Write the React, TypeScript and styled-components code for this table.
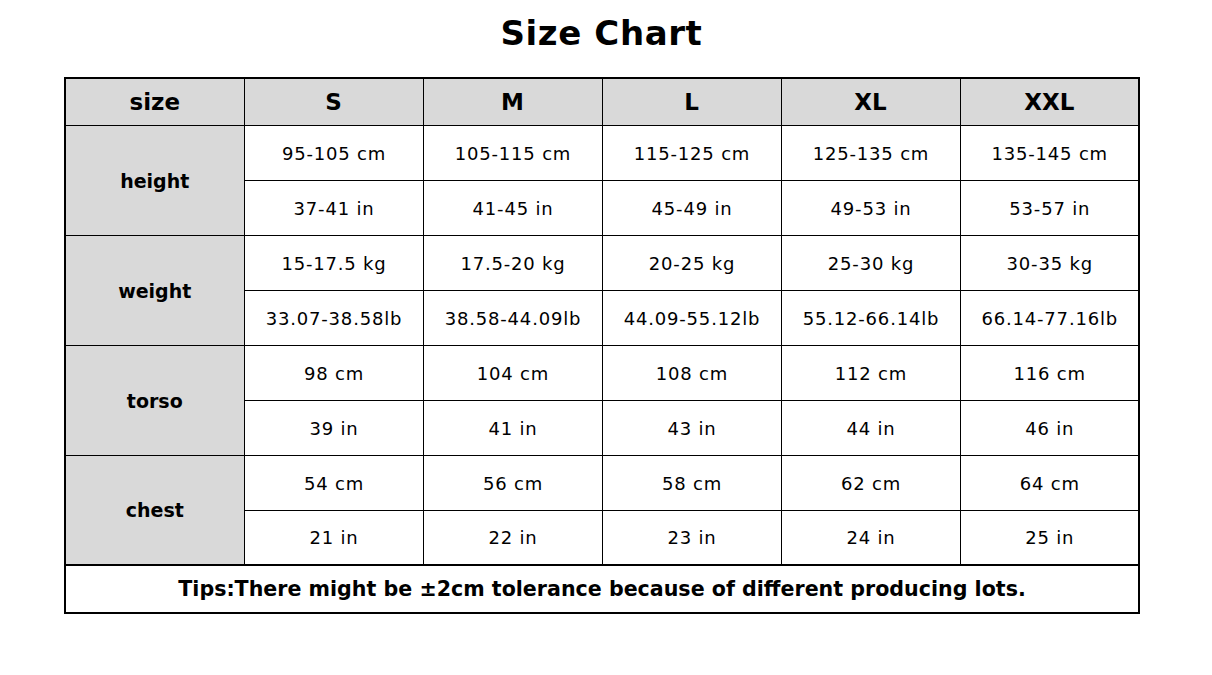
import React from "react";
import styled, { createGlobalStyle } from "styled-components";

const Global = createGlobalStyle`
  html, body { margin: 0; padding: 0; background: #ffffff; }
  body { font-family: Verdana, "DejaVu Sans", sans-serif; color: #000; }
`;

const Page = styled.div`
  width: 1212px;
  height: 675px;
  display: flex;
  flex-direction: column;
  align-items: flex-start;
`;

const Title = styled.h1`
  margin: 0 0 0 64px;
  width: 1074px;
  height: 77px;
  box-sizing: border-box;
  padding-top: 11px;
  padding-left: 1px;
  text-align: center;
  font-size: 34px;
  line-height: 44px;
  font-weight: bold;
  letter-spacing: 0.6px;
`;

const Table = styled.table`
  margin-left: 64px;
  width: 1074px;
  border-collapse: collapse;
  table-layout: fixed;
  border: 2px solid #000;
`;

const HeadCell = styled.th`
  height: 46px;
  padding: 0;
  background: #d9d9d9;
  border: 1px solid #000;
  font-size: 23px;
  font-weight: bold;
  text-align: center;
  vertical-align: middle;
`;

const LabelCell = styled.th`
  padding: 0;
  background: #d9d9d9;
  border: 1px solid #000;
  font-size: 19px;
  font-weight: bold;
  text-align: center;
  vertical-align: middle;
`;

const Cell = styled.td<{ $short?: boolean }>`
  height: ${(p) => (p.$short ? 53 : 54)}px;
  padding: 0 0 0 1px;
  border: 1px solid #000;
  font-size: 18px;
  letter-spacing: 0.8px;
  text-align: center;
  vertical-align: middle;
`;

const TipCell = styled.td`
  height: 46px;
  padding: 0;
  border-top: 2px solid #000;
  font-size: 20.6px;
  font-weight: bold;
  text-align: center;
  vertical-align: middle;
`;

const sizes = ["S", "M", "L", "XL", "XXL"];

const groups: { label: string; rows: string[][] }[] = [
  {
    label: "height",
    rows: [
      ["95-105 cm", "105-115 cm", "115-125 cm", "125-135 cm", "135-145 cm"],
      ["37-41 in", "41-45 in", "45-49 in", "49-53 in", "53-57 in"],
    ],
  },
  {
    label: "weight",
    rows: [
      ["15-17.5 kg", "17.5-20 kg", "20-25 kg", "25-30 kg", "30-35 kg"],
      ["33.07-38.58lb", "38.58-44.09lb", "44.09-55.12lb", "55.12-66.14lb", "66.14-77.16lb"],
    ],
  },
  {
    label: "torso",
    rows: [
      ["98 cm", "104 cm", "108 cm", "112 cm", "116 cm"],
      ["39 in", "41 in", "43 in", "44 in", "46 in"],
    ],
  },
  {
    label: "chest",
    rows: [
      ["54 cm", "56 cm", "58 cm", "62 cm", "64 cm"],
      ["21 in", "22 in", "23 in", "24 in", "25 in"],
    ],
  },
];

export default function App() {
  return (
    <>
      <Global />
      <Page>
        <Title>Size Chart</Title>
        <Table>
          <colgroup>
            <col style={{ width: 179 }} />
            {sizes.map((s) => (
              <col key={s} style={{ width: 179 }} />
            ))}
          </colgroup>
          <thead>
            <tr>
              <HeadCell>size</HeadCell>
              {sizes.map((s) => (
                <HeadCell key={s}>{s}</HeadCell>
              ))}
            </tr>
          </thead>
          <tbody>
            {groups.map((g, gi) =>
              g.rows.map((r, i) => (
                <tr key={g.label + i}>
                  {i === 0 && <LabelCell rowSpan={2}>{g.label}</LabelCell>}
                  {r.map((v, j) => (
                    <Cell key={j} $short={gi === groups.length - 1 && i === 1}>
                      {v}
                    </Cell>
                  ))}
                </tr>
              ))
            )}
            <tr>
              <TipCell colSpan={6}>
                Tips:There might be ±2cm tolerance because of different producing lots.
              </TipCell>
            </tr>
          </tbody>
        </Table>
      </Page>
    </>
  );
}
